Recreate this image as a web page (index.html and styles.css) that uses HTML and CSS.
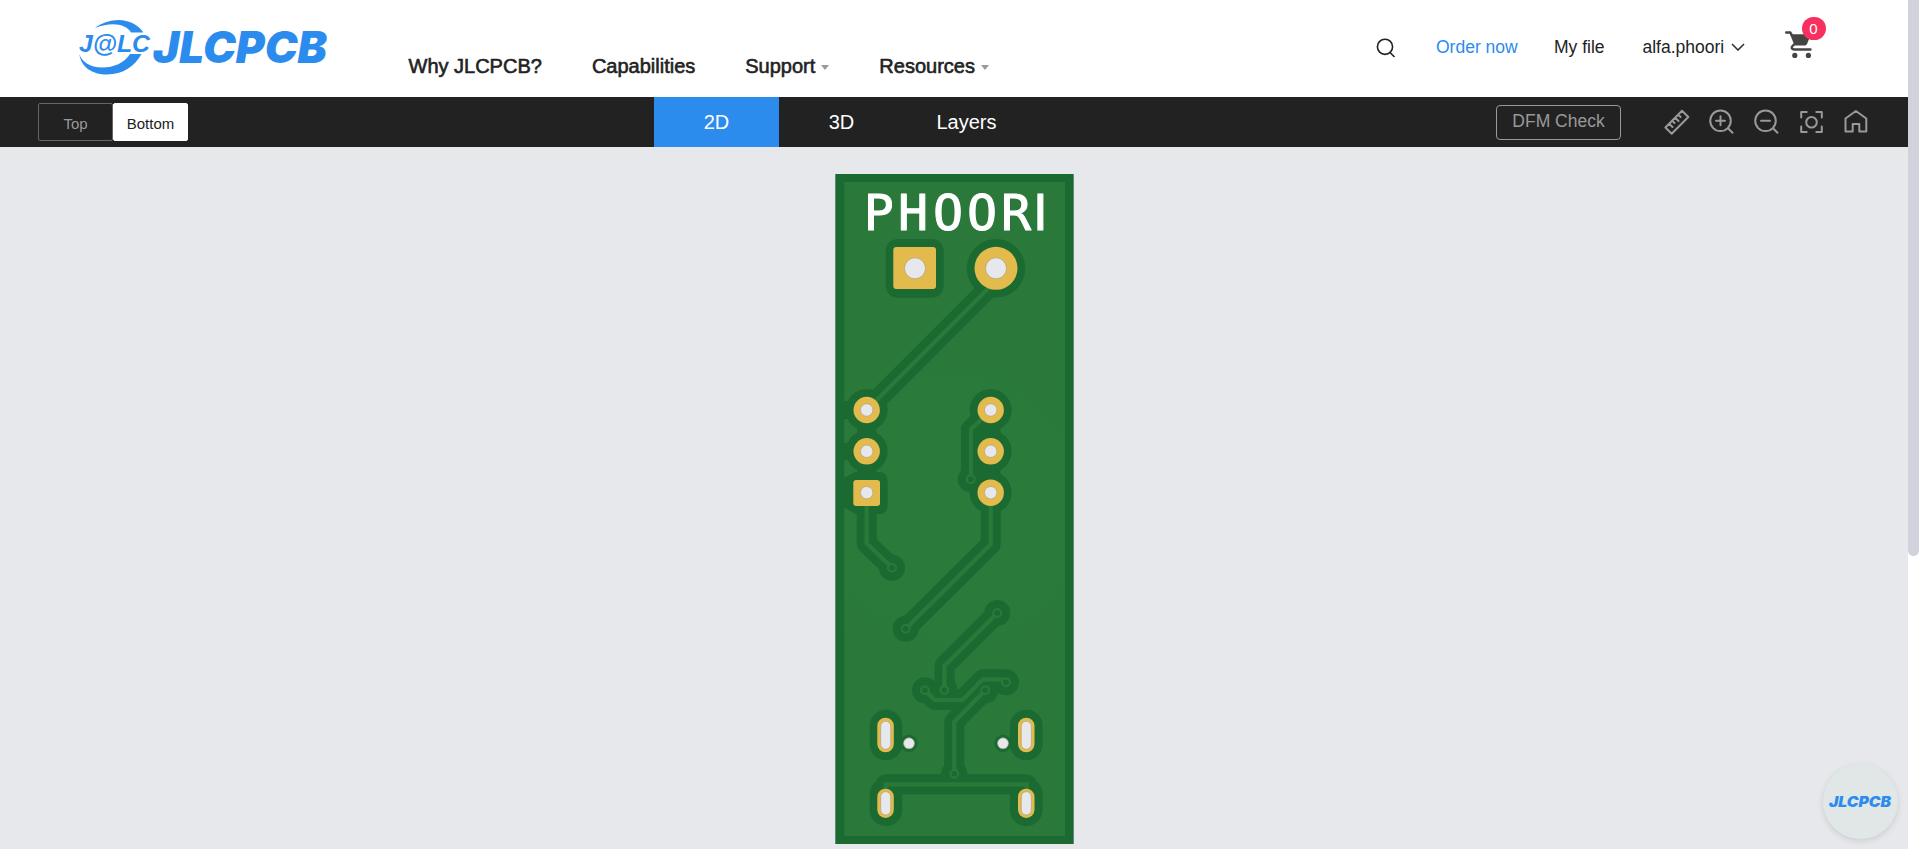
FILE: index.html
```html
<!DOCTYPE html>
<html lang="en">
<head>
<meta charset="utf-8">
<title>JLCPCB Gerber Viewer</title>
<link rel="stylesheet" href="styles.css">
</head>
<body>
<div class="page">
  <header class="header">
    <svg class="logo" width="260" height="70" viewBox="0 0 260 70">
      <path d="M23 16C32 9 45 6.500 54 9C62 11 68 15 71.300 20.500H59C54 12 40 9.500 23 16Z"/>
      <path d="M7.300 42C9 55 20 62.500 35 62.500C51 62.500 63 54 69.500 42H58C52 51 42 55.500 30 55.500C18 55.500 10 50 7.300 42Z"/>
      <text class="logo-mark" x="7" y="39.500" textLength="71" lengthAdjust="spacingAndGlyphs">J@LC</text>
      <text class="logo-word" x="81" y="51" textLength="174" lengthAdjust="spacingAndGlyphs">JLCPCB</text>
    </svg>
    <nav class="nav">
      <a>Why JLCPCB?</a>
      <a>Capabilities</a>
      <a>Support<i class="caret"></i></a>
      <a>Resources<i class="caret"></i></a>
    </nav>
    <div class="account">
      <svg class="search" width="20" height="20" viewBox="0 0 20 20"><circle cx="9" cy="8.800" r="7.600"/><path d="M14 14.500L18.500 19"/></svg>
      <a class="order">Order now</a>
      <a class="myfile">My file</a>
      <a class="user">alfa.phoori</a>
      <svg class="chevron" width="14" height="8" viewBox="0 0 14 8"><path d="M1 1L7 7L13 1"/></svg>
      <div class="cart">
        <svg width="28" height="28" viewBox="0 0 28 28">
          <path class="cart-line" d="M1.200 1.500H5.200L6.500 3.500M25.500 18.500H9.500C6.500 18.500 6 16.500 7.500 15L9 13.500"/>
          <path d="M5 3.200H26L22 13Q21.300 14.600 19.500 14.600H9.500Z"/>
          <circle cx="9.800" cy="24.400" r="2.600"/><circle cx="23.400" cy="24.400" r="2.600"/>
        </svg>
        <span class="badge">0</span>
      </div>
    </div>
  </header>
  <div class="toolbar">
    <div class="sides"><button class="side">Top</button><button class="side side-on">Bottom</button></div>
    <div class="tabs"><a class="tab tab-on">2D</a><a class="tab">3D</a><a class="tab">Layers</a></div>
    <div class="tools">
      <button class="dfm">DFM Check</button>
      <svg class="tool" width="26" height="26" viewBox="0 0 26 26"><path d="M18 1.800L24.300 8L7.700 24.700L1.400 18.500ZM5.500 15L8.500 18M8.500 12L10.500 14M11.500 9L14.500 12M14.500 6L16.500 8"/></svg>
      <svg class="tool" width="26" height="26" viewBox="0 0 26 26"><circle cx="11.500" cy="11.800" r="10.300"/><path d="M19 19.300L23.500 23.800M7 11.800H16M11.500 7.300V16.300"/></svg>
      <svg class="tool" width="26" height="26" viewBox="0 0 26 26"><circle cx="11.500" cy="11.800" r="10.300"/><path d="M19 19.300L23.500 23.800M7 11.800H16"/></svg>
      <svg class="tool" width="26" height="26" viewBox="0 0 26 26"><circle cx="12.500" cy="13.300" r="5.300"/><path d="M2.200 8.500V3H7.700M17.300 3H22.800V8.500M22.800 17.500V23H17.300M7.700 23H2.200V17.500"/></svg>
      <svg class="tool" width="26" height="26" viewBox="0 0 26 26"><path d="M1.500 9.500L11.900 2L22.300 9.500V22.500H15.300V15H8.700V22.500H1.500Z"/></svg>
    </div>
  </div>
  <main class="viewer">
    <svg class="board" width="239" height="670" viewBox="0 0 239 670">
      <defs>
        <radialGradient id="sheen" gradientUnits="userSpaceOnUse" cx="120" cy="335" r="175"><stop offset="0" stop-color="#2a7b3b"/><stop offset="1" stop-color="#2a793a"/></radialGradient>
        <g id="traces">
          <path d="M161 94.300V106.700L31.700 236"/>
          <path d="M155.700 236L136 255.300V305"/>
          <path d="M31.700 319V369.300L57 393.700"/>
          <path d="M155.700 319V370.300L70.700 454.700"/>
          <path d="M162.300 439L109.500 491.700V516"/>
          <path d="M90 516.300L99.700 526H127.300L147.700 505.300H167L171 508.300"/>
          <path d="M150.300 516.300L119.300 547.700V599.700"/>
          <path d="M50.700 630V610.300H191.700V630"/>
        </g>
      </defs>
      <rect class="dark" width="239" height="670"/>
      <rect x="9.300" y="8" width="220.700" height="654" fill="url(#sheen)"/>
      <path class="edge" d="M.5 0V670M238.500 0V670"/>
      <g class="dark">
        <rect x="50.700" y="65" width="58" height="58.700" rx="12"/>
        <circle cx="161" cy="94.300" r="29.200"/>
        <circle cx="31.700" cy="236" r="21"/><circle cx="31.700" cy="277.300" r="21"/>
        <path d="M9 304L20 298H44Q52.700 298 52.700 307V331Q52.700 340 44 340H20L9 333Z"/>
        <rect x="9" y="227" width="6" height="18"/><rect x="9" y="269" width="6" height="17"/>
        <rect x="22" y="240" width="19.500" height="70"/><rect x="146" y="240" width="19.500" height="70"/>
        <circle cx="155.700" cy="236" r="21"/><circle cx="155.700" cy="277.300" r="21"/><circle cx="155.700" cy="318.700" r="21"/>
        <circle cx="135.700" cy="305.300" r="13"/><circle cx="57" cy="393.700" r="13"/><circle cx="70.700" cy="454.700" r="13"/>
        <circle cx="162.300" cy="439" r="13"/><circle cx="109.300" cy="516" r="13"/><circle cx="90" cy="516.300" r="13"/>
        <circle cx="171" cy="508.300" r="13"/><circle cx="150.300" cy="516.300" r="13"/><circle cx="119.300" cy="599.700" r="13"/>
        <rect x="34.700" y="535.700" width="32.600" height="50.600" rx="16"/><rect x="175" y="535.700" width="32.600" height="50.600" rx="16"/>
        <rect x="34.700" y="604" width="32.600" height="48" rx="16"/><rect x="175" y="604" width="32.600" height="48" rx="16"/>
        <circle cx="74" cy="569.300" r="8.700"/><circle cx="168" cy="569.300" r="8.700"/>
      </g>
      <use href="#traces" class="clearance"/>
      <use href="#traces" class="copper"/>
      <g class="via">
        <circle cx="135.700" cy="305.300" r="3.900"/><circle cx="57" cy="393.700" r="3.900"/><circle cx="70.700" cy="454.700" r="3.900"/>
        <circle cx="162.300" cy="439" r="3.900"/><circle cx="109.300" cy="516" r="3.900"/><circle cx="90" cy="516.300" r="3.900"/>
        <circle cx="171" cy="508.300" r="3.900"/><circle cx="150.300" cy="516.300" r="3.900"/><circle cx="119.300" cy="599.700" r="3.900"/>
      </g>
      <g class="gold">
        <rect x="58.300" y="73" width="42.700" height="42" rx="3"/><circle cx="161" cy="94.300" r="21.500"/>
        <circle cx="31.700" cy="236" r="13.200"/><circle cx="31.700" cy="277.300" r="13.200"/><rect x="18.300" y="306" width="26.700" height="26" rx="3"/>
        <circle cx="155.700" cy="236" r="13.200"/><circle cx="155.700" cy="277.300" r="13.200"/><circle cx="155.700" cy="318.700" r="13.200"/>
        <rect x="42.300" y="543.700" width="16.500" height="34.600" rx="8.200"/><rect x="183" y="543.700" width="16.500" height="34.600" rx="8.200"/>
        <rect x="42.300" y="614.700" width="16.500" height="29.300" rx="8.200"/><rect x="183" y="614.700" width="16.500" height="29.300" rx="8.200"/>
      </g>
      <g class="hole">
        <circle cx="80" cy="94.300" r="10.500"/><circle cx="161" cy="94.300" r="10.500"/>
        <circle cx="31.700" cy="236" r="6.200"/><circle cx="31.700" cy="277.300" r="6.200"/><circle cx="31.700" cy="318.700" r="6.200"/>
        <circle cx="155.700" cy="236" r="6.200"/><circle cx="155.700" cy="277.300" r="6.200"/><circle cx="155.700" cy="318.700" r="6.200"/>
        <rect x="45.700" y="547.200" width="10" height="28" rx="5"/><rect x="186.300" y="547.200" width="10" height="28" rx="5"/>
        <rect x="45.700" y="617.700" width="10" height="23.300" rx="5"/><rect x="186.300" y="617.700" width="10" height="23.300" rx="5"/>
        <circle cx="74" cy="569.300" r="5.500"/><circle cx="168" cy="569.300" r="5.500"/>
      </g>
      <text class="silk" y="56" x="28.700 63 98 132 166 198">PHOOR<tspan class="silk-i">I</tspan></text>
    </svg>
    <div class="chat"><svg width="64" height="16" viewBox="0 0 64 16"><text class="chat-word" x="1" y="13" textLength="62" lengthAdjust="spacingAndGlyphs">JLCPCB</text></svg></div>
  </main>
</div>
<div class="scrollbar"><div class="thumb"></div></div>
</body>
</html>
```
FILE: styles.css
```css
* { box-sizing: border-box; }
body {
  margin: 0;
  height: 849px;
  overflow: hidden;
  display: flex;
  background: #fff;
  font-family: "Liberation Sans", Arial, sans-serif;
}
.page { width: 1908px; display: flex; flex-direction: column; }
.header { height: 97px; display: flex; background: #fff; }
.logo { margin: 12px 0 0 72px; fill: #2c8ced; flex: none; }
.logo-mark { font: italic 700 24px "Liberation Sans", sans-serif; }
.logo-word { font: italic 900 44px Inter, sans-serif; }
.nav {
  display: flex;
  width: 620px;
  padding: 35px 0 0 76.500px;
  gap: 50px;
  font-size: 20px;
  line-height: 24px;
  color: #222;
  -webkit-text-stroke: 0.6px #222;
  white-space: nowrap;
}
.nav a { display: flex; align-items: center; }
.caret {
  margin: 3px 0 0 6px;
  border: 4px solid transparent;
  border-top: 5px solid #999;
  border-bottom: 0;
}
.account {
  display: flex;
  margin-left: auto;
  width: 532px;
  font-size: 17.500px;
  line-height: 20px;
  color: #222;
  white-space: nowrap;
}
.account a { margin-top: 37px; }
.search { margin-top: 38px; fill: none; stroke: #222; stroke-width: 1.600; }
.account .order { margin-left: 40px; width: 118px; color: #2c8ced; }
.account .myfile { width: 88.500px; }
.account .user { width: 88px; }
.chevron { margin-top: 43px; fill: none; stroke: #333; stroke-width: 1.600; }
.cart { position: relative; margin: 31px 0 0 40px; width: 28px; height: 28px; fill: #444; }
.cart-line { fill: none; stroke: #444; stroke-width: 2.400; stroke-linecap: round; }
.badge {
  position: absolute;
  left: 17px;
  top: -14px;
  width: 24px;
  height: 23px;
  border-radius: 12px;
  background: #f92f60;
  color: #fff;
  font-size: 15px;
  line-height: 23px;
  text-align: center;
}
.toolbar {
  height: 50px;
  display: grid;
  grid-template-columns: 654px 375px 1fr;
  background: #222;
}
.sides { display: flex; padding: 6px 0 0 38px; }
.side {
  width: 75px;
  height: 38px;
  padding: 2px 0 0;
  border: 1px solid #666;
  border-radius: 2px;
  background: none;
  color: #999;
  font: 15px "Liberation Sans", sans-serif;
}
.side-on { background: #fff; border-color: #fff; color: #222; }
.tabs { display: flex; }
.tab { width: 125px; font-size: 20px; line-height: 50px; color: #fff; text-align: center; }
.tab-on { background: #2c8ced; }
.tools { display: flex; gap: 19px; padding-left: 467px; }
.dfm {
  width: 125px;
  height: 35px;
  margin: 8px 23.500px 0 0;
  padding: 0 0 3px;
  border: 1px solid #999;
  border-radius: 4px;
  background: none;
  color: #999;
  font: 17.500px "Liberation Sans", sans-serif;
  white-space: nowrap;
}
.tool {
  margin-top: 12px;
  flex: none;
  fill: none;
  stroke: #999;
  stroke-width: 2;
  stroke-linejoin: round;
  stroke-linecap: round;
}
.viewer { position: relative; flex: 1; padding: 27px 0 0 835px; background: #e7e8ec; }
.board { display: block; }
.dark { fill: #1a6a31; }
.edge { stroke: #5c8b73; fill: none; }
.clearance { fill: none; stroke: #1a6a31; stroke-width: 20; stroke-linejoin: round; stroke-linecap: round; }
.copper { fill: none; stroke: #2a793a; stroke-width: 4.300; }
.via { fill: #1a6a31; stroke: #2a793a; stroke-width: 2.200; }
.gold { fill: #e3bb4d; }
.hole { fill: #e7e8ec; stroke: #a99b7a; stroke-width: 0.600; }
.silk {
  font: 50px "DejaVu Sans Mono", monospace;
  fill: #fff;
  stroke: #fff;
  stroke-width: 1;
  stroke-linejoin: round;
}
.silk-i { font-family: "DejaVu Sans", sans-serif; }
.chat {
  position: absolute;
  left: 1822.500px;
  bottom: 10px;
  width: 75px;
  height: 75px;
  border-radius: 50%;
  background: #e1e6e6;
  box-shadow: 0 2px 6px rgba(0, 0, 0, 0.12);
  display: flex;
  align-items: center;
  justify-content: center;
}
.chat-word { font: italic 900 15px Inter, sans-serif; fill: #2c8ced; }
.scrollbar { width: 11px; background: #fff; }
.thumb { height: 556px; background: #d0d3dc; border-radius: 0 0 6px 6px; }
```
